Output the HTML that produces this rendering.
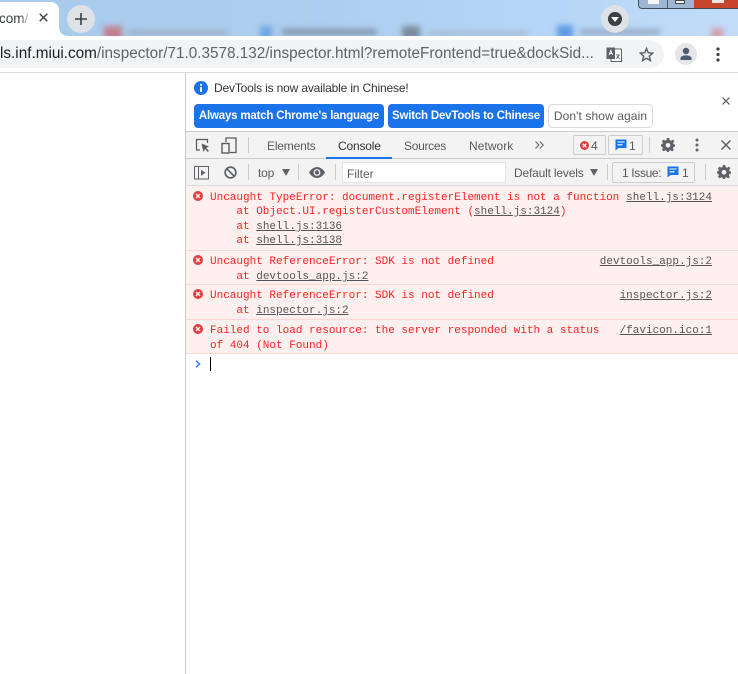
<!DOCTYPE html>
<html><head><meta charset="utf-8">
<style>
*{box-sizing:border-box}
html,body{margin:0;padding:0;width:738px;height:674px;overflow:hidden;background:#fff}
body{position:relative;font-family:"Liberation Sans",sans-serif}
.a{position:absolute;white-space:nowrap}
.ui{font-size:12px;color:#5a5a5a;line-height:14px;letter-spacing:-.18px}
.m{position:absolute;white-space:pre;font:11px/14px "Liberation Mono",monospace;color:#f22}
.l{position:absolute;white-space:pre;font:11px/14px "Liberation Mono",monospace;color:#555;text-decoration:underline}
.u{color:#555;text-decoration:underline}
.row{position:absolute;left:186px;width:552px;background:#fff0f0;border-bottom:1px solid #ffd6d6}
.sep{position:absolute;width:1px;background:#ccc}
.blur{position:absolute;filter:blur(3px)}
.err{position:absolute;left:193px;width:10px;height:10px}
.btn{position:absolute;top:104px;height:24px;background:#1a73e8;color:#fff;font-weight:bold;font-size:11.5px;line-height:25px;border-radius:4px;text-align:center;white-space:nowrap;letter-spacing:-.2px}
.badge{position:absolute;height:20px;border:1px solid #ccc;border-radius:2px;background:#f3f3f3}
</style></head><body>

<!-- browser top -->
<div class="a" style="left:0;top:0;width:738px;height:36px;overflow:hidden;background:linear-gradient(90deg,#a9cbec 0,#adcdee 40%,#b4d5f7 70%,#c2dcf8 100%)">
<div class="blur" style="left:104px;top:26px;width:18px;height:14px;background:#c27f8c"></div>
<div class="blur" style="left:128px;top:30px;width:100px;height:6px;background:#9db2cb"></div>
<div class="blur" style="left:260px;top:26px;width:12px;height:14px;background:#6fa8e2"></div>
<div class="blur" style="left:282px;top:29px;width:95px;height:6px;background:#8294ac"></div>
<div class="blur" style="left:402px;top:26px;width:18px;height:14px;background:#7c8c9e"></div>
<div class="blur" style="left:428px;top:31px;width:100px;height:5px;background:#a6bbd3"></div>
<div class="blur" style="left:557px;top:25px;width:16px;height:14px;background:#5f9ce0"></div>
<div class="blur" style="left:580px;top:29px;width:80px;height:6px;background:#96abc5"></div>
<div class="blur" style="left:711px;top:28px;width:12px;height:12px;background:#d4a0ae"></div>
</div>

<!-- window controls -->
<div class="a" style="left:638px;top:-2px;width:100px;height:11px;background:#9fb6d2;border:1px solid #3e4c5e;border-radius:0 0 0 4px"></div>
<div class="a" style="left:667px;top:0;width:1px;height:8px;background:#4e5c6e"></div>
<div class="a" style="left:694px;top:0;width:44px;height:8px;background:#c8442c"></div>
<div class="a" style="left:648px;top:0;width:11px;height:4px;background:#f4f6f8"></div>
<div class="a" style="left:675px;top:0;width:10px;height:4px;background:#e8eef4;border:1px solid #444"></div>
<div class="a" style="left:712px;top:0;width:12px;height:3px;background:#f4e4e0"></div>

<!-- tab -->
<div class="a" style="left:0;top:2px;width:59px;height:34px;background:#fff;border-radius:0 8px 0 0"></div>
<div class="a" style="left:59px;top:28px;width:8px;height:8px;background:radial-gradient(circle at 100% 0,transparent 7.5px,#fff 8px)"></div>
<div class="a" style="left:-1px;top:11px;width:30px;overflow:hidden;font-size:13.5px;line-height:16px;color:#3c4043">com/i</div>
<div class="a" style="left:20px;top:8px;width:11px;height:24px;background:linear-gradient(90deg,rgba(255,255,255,0),#fff)"></div>
<svg class="a" style="left:39px;top:13px" width="9" height="9" viewBox="0 0 9 9"><path d="M.7.7L8.3 8.3M8.3.7L.7 8.3" stroke="#3c4043" stroke-width="1.4"/></svg>
<!-- new tab -->
<div class="a" style="left:67px;top:5px;width:28px;height:28px;border-radius:50%;background:#dee1e6"></div>
<svg class="a" style="left:75px;top:13px" width="12" height="12" viewBox="0 0 12 12"><path d="M6 0V12M0 6H12" stroke="#3c4043" stroke-width="1.6"/></svg>
<!-- media button -->
<div class="a" style="left:601px;top:5px;width:28px;height:28px;border-radius:50%;background:#dee1e6"></div>
<div class="a" style="left:608px;top:12px;width:14px;height:14px;border-radius:50%;background:#3c4043"></div>
<svg class="a" style="left:611px;top:17px" width="8" height="5" viewBox="0 0 8 5"><path d="M0 0H8L4 5Z" fill="#fff"/></svg>

<!-- toolbar -->
<div class="a" style="left:0;top:36px;width:738px;height:36px;background:#fff"></div>
<div class="a" style="left:-20px;top:40px;width:684px;height:28px;background:#f1f3f4;border-radius:14px"></div>
<div class="a" style="left:0;top:45px;width:597px;overflow:hidden;font-size:15.3px;line-height:18px;color:#5f6368"><span style="color:#202124">ls.inf.miui.com</span>/inspector/71.0.3578.132/inspector.html?remoteFrontend=true&amp;dockSid...</div>
<!-- translate icon -->
<svg class="a" style="left:606px;top:47px" width="16" height="15" viewBox="0 0 16 15"><rect x="5" y="2" width="10.5" height="12.5" fill="#fff" stroke="#5f6368"/><path d="M0.5 0.5H9V12H0.5Z" fill="#5f6368"/><path d="M3 8L4.8 3.5L6.6 8M3.6 6.5H6" stroke="#fff" fill="none"/><path d="M10 8H14M12 7V8M13 8C12.6 10 11.4 11 10 11.6M11 9C11.6 10.4 12.6 11.2 14 11.6" stroke="#5f6368" fill="none" stroke-width=".8"/></svg>
<!-- star -->
<svg class="a" style="left:639px;top:47px" width="15" height="15" viewBox="0 0 15 15"><path d="M7.5 1.5L9.2 5.7L13.8 6.1L10.3 9.1L11.4 13.6L7.5 11.2L3.6 13.6L4.7 9.1L1.2 6.1L5.8 5.7Z" fill="none" stroke="#5f6368" stroke-width="1.5"/></svg>
<!-- profile -->
<div class="a" style="left:675px;top:43px;width:22px;height:22px;border-radius:50%;background:#e4e6ea"></div>
<svg class="a" style="left:679px;top:47px" width="14" height="14" viewBox="0 0 14 14"><circle cx="7" cy="4" r="3.2" fill="#4d5b6e"/><path d="M1.5 13V11.2C1.5 9.3 4.5 8.4 7 8.4S12.5 9.3 12.5 11.2V13Z" fill="#4d5b6e"/></svg>
<!-- menu dots -->
<svg class="a" style="left:716px;top:47px" width="4" height="15" viewBox="0 0 4 15"><circle cx="2" cy="2" r="1.6" fill="#3c4043"/><circle cx="2" cy="7.5" r="1.6" fill="#3c4043"/><circle cx="2" cy="13" r="1.6" fill="#3c4043"/></svg>

<div class="a" style="left:0;top:72px;width:738px;height:1px;background:#dcdcdc"></div>
<div class="a" style="left:185px;top:73px;width:1px;height:601px;background:#ccc"></div>

<!-- infobar -->
<svg class="a" style="left:194px;top:81px" width="14" height="14" viewBox="0 0 14 14"><circle cx="7" cy="7" r="7" fill="#1a73e8"/><rect x="6.1" y="6" width="1.8" height="5" fill="#fff"/><rect x="6.1" y="3" width="1.8" height="1.8" fill="#fff"/></svg>
<div class="a" style="left:214px;top:81px;font-size:12px;line-height:14px;color:#333;letter-spacing:-.17px">DevTools is now available in Chinese!</div>
<div class="btn" style="left:194px;width:190px">Always match Chrome's language</div>
<div class="btn" style="left:388px;width:156px">Switch DevTools to Chinese</div>
<div class="a" style="left:548px;top:104px;width:105px;height:24px;border:1px solid #dadce0;border-radius:4px;background:#fff;font-size:12px;line-height:23px;text-align:center;color:#5a5a5a;letter-spacing:.1px">Don't show again</div>
<svg class="a" style="left:722px;top:97px" width="8" height="8" viewBox="0 0 8 8"><path d="M.5.5L7.5 7.5M7.5.5L.5 7.5" stroke="#555" stroke-width="1.2"/></svg>

<!-- tabs toolbar -->
<div class="a" style="left:186px;top:131px;width:552px;height:28px;background:#f3f3f3;border-top:1px solid #ccc;border-bottom:1px solid #ccc"></div>
<svg class="a" style="left:195px;top:138px" width="16" height="15" viewBox="0 0 16 15"><path d="M5 12H1.5V1.5H12.5V5" fill="none" stroke="#5a5a5a" stroke-width="1.2"/><path d="M6.5 5.5L14 8.5L11 10L14 13L12.8 14L10 11L8.5 14Z" fill="#5a5a5a"/></svg>
<svg class="a" style="left:221px;top:137px" width="16" height="17" viewBox="0 0 16 17"><path d="M5 5V1H15V15.5H9" fill="none" stroke="#5a5a5a" stroke-width="1.3"/><rect x="1" y="6.5" width="7" height="9.5" fill="none" stroke="#5a5a5a" stroke-width="1.4"/></svg>
<div class="sep" style="left:248px;top:137px;height:16px"></div>
<div class="a ui" style="left:267px;top:139px">Elements</div>
<div class="a ui" style="left:338px;top:139px;color:#333">Console</div>
<div class="a" style="left:326px;top:157px;width:66px;height:2px;background:#1a73e8"></div>
<div class="a ui" style="left:404px;top:139px;letter-spacing:-.3px">Sources</div>
<div class="a ui" style="left:469px;top:139px;letter-spacing:.05px">Network</div>
<svg class="a" style="left:535px;top:141px" width="9" height="8" viewBox="0 0 9 8"><path d="M.5.5L3.8 4L.5 7.5M4.8.5L8.2 4L4.8 7.5" fill="none" stroke="#666" stroke-width="1.1"/></svg>
<div class="badge" style="left:573px;top:135px;width:33px"></div>
<svg class="a" style="left:580px;top:141px" width="9" height="9" viewBox="0 0 9 9"><circle cx="4.5" cy="4.5" r="4.5" fill="#e03d3d"/><path d="M2.7 2.7L6.3 6.3M6.3 2.7L2.7 6.3" stroke="#fff" stroke-width="1.2"/></svg>
<div class="a ui" style="left:591px;top:139px">4</div>
<div class="badge" style="left:608px;top:135px;width:35px"></div>
<svg class="a" style="left:615px;top:139px" width="12" height="12" viewBox="0 0 12 12"><path d="M0.5 0.5H11.5V9H3.5L0.5 11.5Z" fill="#1a73e8"/><path d="M2.5 3H9.5M2.5 5.8H7.5" stroke="#fff" stroke-width="1.1"/></svg>
<div class="a ui" style="left:629px;top:139px">1</div>
<div class="sep" style="left:649px;top:137px;height:16px"></div>
<svg class="a" style="left:661px;top:138px" width="14" height="14" viewBox="0 0 14 14"><path d="M5.8 0H8.2L8.6 2L10.1 2.7L11.9 1.6L13.4 3.3L12.1 4.9L12.7 6.2L14 6.6V8.6L12.5 9L11.9 10.3L12.9 12L11.2 13.4L9.6 12.2L8.3 12.7L8 14H6L5.6 12.7L4.3 12.2L2.7 13.3L.9 11.8L1.9 10.2L1.4 9L0 8.5V6.5L1.4 6L1.9 4.8L.9 3.2L2.5 1.6L4.2 2.6L5.5 2Z" fill="#5f6368"/><circle cx="7" cy="7.3" r="2.3" fill="#f3f3f3"/></svg>
<svg class="a" style="left:695px;top:138px" width="4" height="14" viewBox="0 0 4 14"><circle cx="2" cy="2" r="1.5" fill="#5f6368"/><circle cx="2" cy="7" r="1.5" fill="#5f6368"/><circle cx="2" cy="12" r="1.5" fill="#5f6368"/></svg>
<svg class="a" style="left:721px;top:140px" width="10" height="10" viewBox="0 0 10 10"><path d="M.5.5L9.5 9.5M9.5.5L.5 9.5" stroke="#5f6368" stroke-width="1.5"/></svg>

<!-- console toolbar -->
<div class="a" style="left:186px;top:159px;width:552px;height:27px;background:#f3f3f3;border-bottom:1px solid #ddd"></div>
<svg class="a" style="left:194px;top:166px" width="15" height="14" viewBox="0 0 15 14"><rect x=".5" y=".5" width="14" height="12.5" fill="none" stroke="#5f6368"/><path d="M4.5 1V13" stroke="#5f6368"/><path d="M7 3.7L11.5 6.8L7 9.9Z" fill="#5f6368"/></svg>
<svg class="a" style="left:224px;top:166px" width="13" height="13" viewBox="0 0 13 13"><circle cx="6.5" cy="6.5" r="5.4" fill="none" stroke="#5f6368" stroke-width="1.7"/><path d="M2.7 2.7L10.3 10.3" stroke="#5f6368" stroke-width="1.7"/></svg>
<div class="sep" style="left:248px;top:164px;height:16px"></div>
<div class="a ui" style="left:258px;top:166px">top</div>
<svg class="a" style="left:282px;top:169px" width="8" height="7" viewBox="0 0 8 7"><path d="M0 0H8L4 7Z" fill="#5f6368"/></svg>
<div class="sep" style="left:298px;top:164px;height:16px"></div>
<svg class="a" style="left:309px;top:167px" width="16" height="11" viewBox="0 0 16 11"><path d="M0 5.5C2 2 5 0 8 0S14 2 16 5.5C14 9 11 11 8 11S2 9 0 5.5Z" fill="#5f6368"/><circle cx="8" cy="5.5" r="3.4" fill="#f3f3f3"/><circle cx="8" cy="5.5" r="2.2" fill="#5f6368"/></svg>
<div class="sep" style="left:335px;top:164px;height:16px"></div>
<div class="a" style="left:342px;top:162px;width:164px;height:21px;background:#fff;border:1px solid #e4e4e4"></div>
<div class="a ui" style="left:347px;top:167px;letter-spacing:0">Filter</div>
<div class="a ui" style="left:514px;top:166px">Default levels</div>
<svg class="a" style="left:590px;top:169px" width="8" height="7" viewBox="0 0 8 7"><path d="M0 0H8L4 7Z" fill="#5f6368"/></svg>
<div class="sep" style="left:607px;top:164px;height:16px"></div>
<div class="badge" style="left:612px;top:162px;width:83px;height:21px"></div>
<div class="a ui" style="left:622px;top:166px;letter-spacing:-.35px">1 Issue:</div>
<svg class="a" style="left:667px;top:166px" width="12" height="12" viewBox="0 0 12 12"><path d="M0.5 0.5H11.5V9H3.5L0.5 11.5Z" fill="#1a73e8"/><path d="M2.5 3H9.5M2.5 5.8H7.5" stroke="#fff" stroke-width="1.1"/></svg>
<div class="a ui" style="left:682px;top:166px">1</div>
<div class="sep" style="left:705px;top:164px;height:16px"></div>
<svg class="a" style="left:717px;top:165px" width="14" height="14" viewBox="0 0 14 14"><path d="M5.8 0H8.2L8.6 2L10.1 2.7L11.9 1.6L13.4 3.3L12.1 4.9L12.7 6.2L14 6.6V8.6L12.5 9L11.9 10.3L12.9 12L11.2 13.4L9.6 12.2L8.3 12.7L8 14H6L5.6 12.7L4.3 12.2L2.7 13.3L.9 11.8L1.9 10.2L1.4 9L0 8.5V6.5L1.4 6L1.9 4.8L.9 3.2L2.5 1.6L4.2 2.6L5.5 2Z" fill="#5f6368"/><circle cx="7" cy="7.3" r="2.3" fill="#f3f3f3"/></svg>

<!-- console rows -->
<div class="row" style="top:186px;height:65px"></div>
<div class="row" style="top:251px;height:34px"></div>
<div class="row" style="top:285px;height:35px"></div>
<div class="row" style="top:320px;height:34px"></div>

<svg width="0" height="0" style="position:absolute"><defs><g id="e"><circle cx="5" cy="5" r="5" fill="#e03d3d"/><path d="M3 3L7 7M7 3L3 7" stroke="#fff" stroke-width="1.4"/></g></defs></svg>
<svg class="err" style="top:191px" viewBox="0 0 10 10"><use href="#e"/></svg>
<svg class="err" style="top:255px" viewBox="0 0 10 10"><use href="#e"/></svg>
<svg class="err" style="top:289px" viewBox="0 0 10 10"><use href="#e"/></svg>
<svg class="err" style="top:324px" viewBox="0 0 10 10"><use href="#e"/></svg>

<div class="m" style="left:210px;top:191px">Uncaught TypeError: document.registerElement is not a function</div>
<div class="l" style="right:26px;top:191px">shell.js:3124</div>
<div class="m" style="left:210px;top:205px">    at Object.UI.registerCustomElement (<span class="u">shell.js:3124</span>)</div>
<div class="m" style="left:210px;top:220px">    at <span class="u">shell.js:3136</span></div>
<div class="m" style="left:210px;top:234px">    at <span class="u">shell.js:3138</span></div>

<div class="m" style="left:210px;top:255px">Uncaught ReferenceError: SDK is not defined</div>
<div class="l" style="right:26px;top:255px">devtools_app.js:2</div>
<div class="m" style="left:210px;top:270px">    at <span class="u">devtools_app.js:2</span></div>

<div class="m" style="left:210px;top:289px">Uncaught ReferenceError: SDK is not defined</div>
<div class="l" style="right:26px;top:289px">inspector.js:2</div>
<div class="m" style="left:210px;top:304px">    at <span class="u">inspector.js:2</span></div>

<div class="m" style="left:210px;top:324px">Failed to load resource: the server responded with a status</div>
<div class="l" style="right:26px;top:324px">/favicon.ico:1</div>
<div class="m" style="left:210px;top:339px">of 404 (Not Found)</div>

<svg class="a" style="left:195px;top:360px" width="6" height="8" viewBox="0 0 6 8"><path d="M1 .8L4.5 4L1 7.2" fill="none" stroke="#367cf1" stroke-width="1.5"/></svg>
<div class="a" style="left:210px;top:357px;width:1px;height:14px;background:#000"></div>

</body></html>
